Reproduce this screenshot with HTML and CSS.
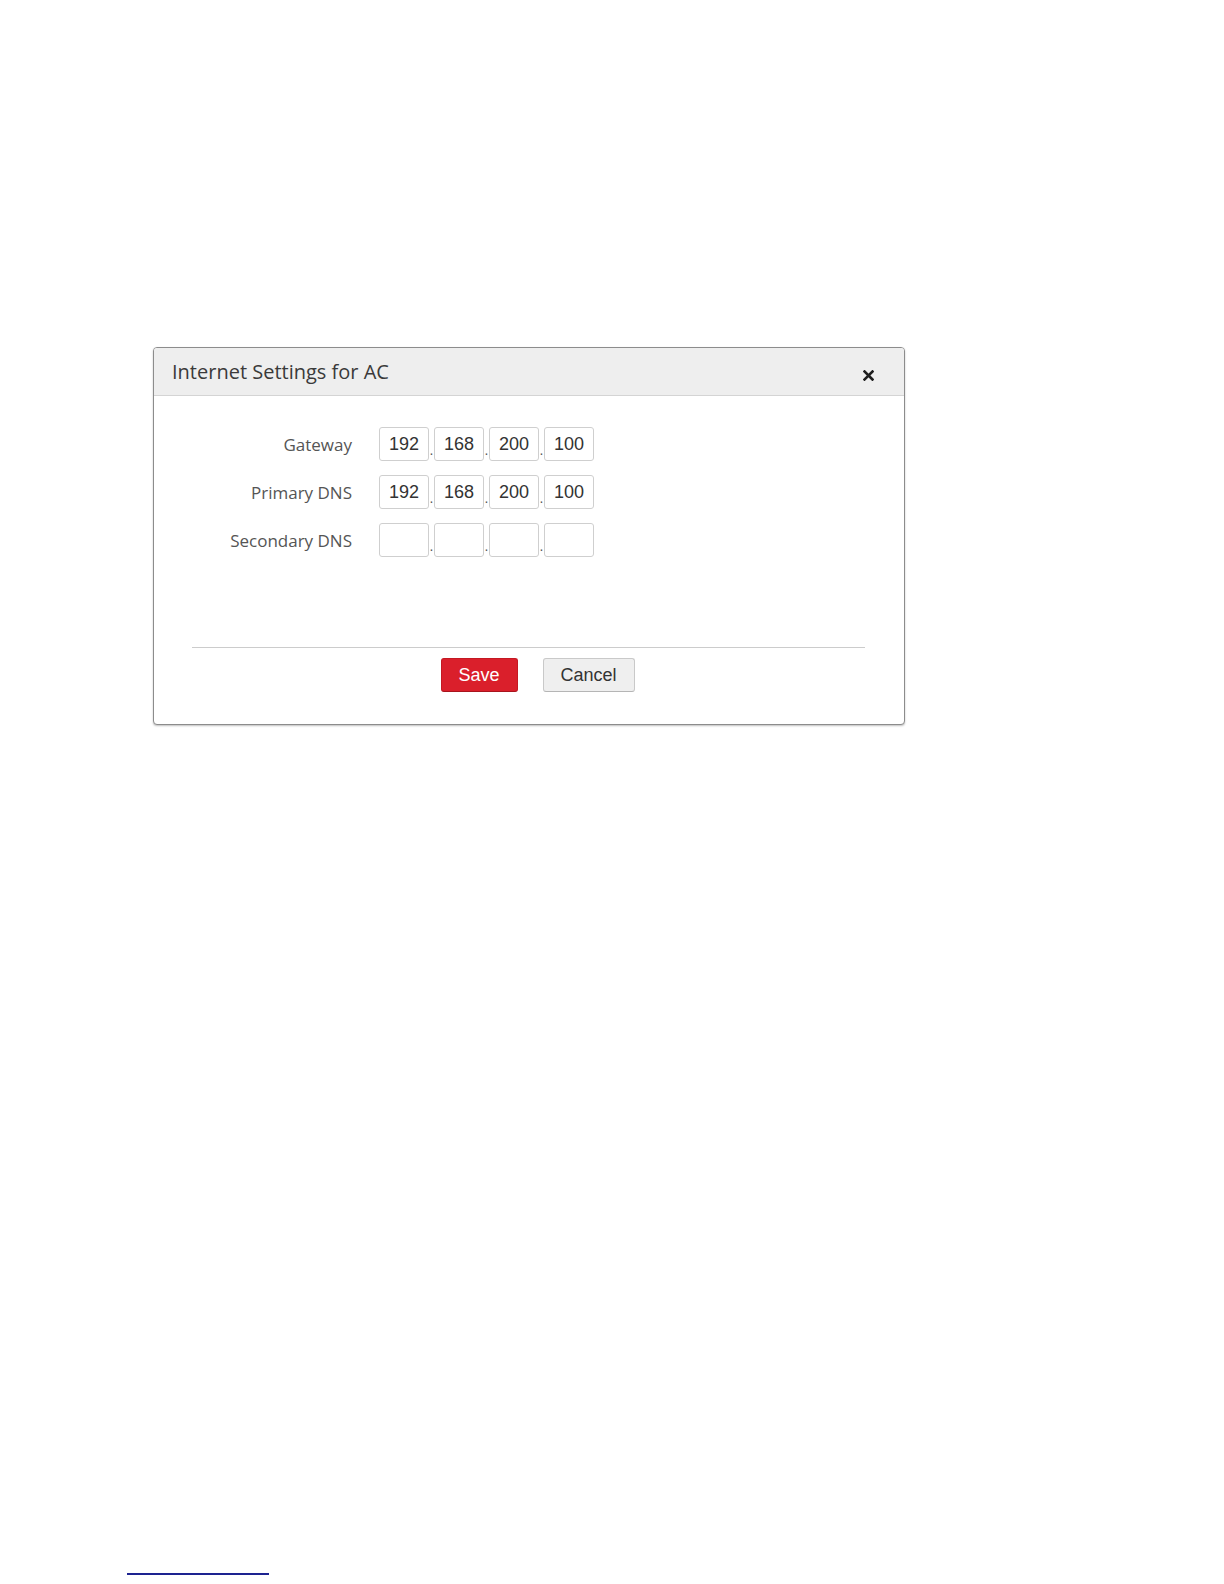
FILE: index.html
```html
<!DOCTYPE html>
<html>
<head>
    <title>Internet Settings for AC</title>
    <link rel="stylesheet" href="styles.css">
</head>
<body>
    <div class="page">
        <div class="dialog">
            <div class="dialog-header">
                <span class="dialog-title">Internet Settings for AC</span>
                <button class="close" type="button" aria-label="Close">
                    <svg width="11" height="11" viewBox="0 0 11 11">
                        <path d="M1.5 1.5 L9.5 9.5 M9.5 1.5 L1.5 9.5" stroke="#1e1e1e" stroke-width="2.6" stroke-linecap="square"/>
                    </svg>
                </button>
            </div>
            <form class="dialog-body">
                <div class="row">
                    <label>Gateway</label>
                    <div class="ip">
                        <input type="text" value="192"><span class="dot">.</span>
                        <input type="text" value="168"><span class="dot">.</span>
                        <input type="text" value="200"><span class="dot">.</span>
                        <input type="text" value="100">
                    </div>
                </div>
                <div class="row">
                    <label>Primary DNS</label>
                    <div class="ip">
                        <input type="text" value="192"><span class="dot">.</span>
                        <input type="text" value="168"><span class="dot">.</span>
                        <input type="text" value="200"><span class="dot">.</span>
                        <input type="text" value="100">
                    </div>
                </div>
                <div class="row">
                    <label>Secondary DNS</label>
                    <div class="ip">
                        <input type="text" value=""><span class="dot">.</span>
                        <input type="text" value=""><span class="dot">.</span>
                        <input type="text" value=""><span class="dot">.</span>
                        <input type="text" value="">
                    </div>
                </div>
            </form>
            <div class="dialog-footer">
                <button class="btn btn-save" type="button">Save</button>
                <button class="btn btn-cancel" type="button">Cancel</button>
            </div>
        </div>
        <div class="footnote-rule"></div>
    </div>
</body>
</html>
```

FILE: styles.css
```css
body {
    margin: 0;
    background-color: #fff;
    font-family: "Open Sans", "Noto Sans", sans-serif;
}

.page {
    padding-top: 347px;
    padding-left: 153px;
}

.dialog {
    width: 750px;
    height: 376px;
    border: 1px solid #8c8c8c;
    border-radius: 4px;
    background-color: #fff;
    box-shadow: 0 1px 2px rgba(0, 0, 0, 0.25);
    display: flex;
    flex-direction: column;
}

.dialog-header {
    height: 47px;
    display: flex;
    align-items: center;
    justify-content: space-between;
    padding: 0 30px 0 18px;
    background-color: #eeeeee;
    border-bottom: 1px solid #d4d4d4;
    border-radius: 3px 3px 0 0;
}

.dialog-title {
    font-size: 20px;
    color: #3a3a3a;
}

.close {
    border: none;
    background: none;
    padding: 0;
    margin-top: 8px;
    display: flex;
    cursor: pointer;
}

.dialog-body {
    padding-top: 31px;
    height: 251px;
    box-sizing: border-box;
    display: flex;
    flex-direction: column;
    gap: 14px;
}

.row {
    display: flex;
    align-items: center;
}

.row label {
    width: 198px;
    text-align: right;
    font-size: 17px;
    color: #555;
    margin-right: 27px;
}

.ip {
    display: flex;
    align-items: flex-end;
}

.ip input {
    width: 50px;
    height: 34px;
    box-sizing: border-box;
    border: 1px solid #cfcfcf;
    border-radius: 3px;
    padding: 0;
    text-align: center;
    font-family: "Liberation Sans", Arial, sans-serif;
    font-size: 18px;
    color: #333;
}

.dot {
    width: 5px;
    text-align: center;
    font-family: "Liberation Sans", Arial, sans-serif;
    font-size: 14px;
    line-height: 14px;
    color: #555;
    padding-bottom: 4px;
}

.dialog-footer {
    margin: 0 39px 0 38px;
    border-top: 1px solid #cccccc;
    padding: 10px 0 0 18px;
    display: flex;
    justify-content: center;
    gap: 25px;
}

.btn {
    height: 34px;
    border-radius: 3px;
    font-family: "Liberation Sans", Arial, sans-serif;
    font-size: 18px;
    cursor: pointer;
}

.btn-save {
    width: 77px;
    background-color: #da1f2b;
    border: 1px solid #c41822;
    border-bottom-color: #a8141d;
    color: #fff;
}

.btn-cancel {
    width: 92px;
    background-color: #efefef;
    border: 1px solid #c9c9c9;
    border-bottom-color: #b5b5b5;
    color: #333;
}

.footnote-rule {
    width: 142px;
    height: 2px;
    margin: 848px 0 0 -26px;
    background-color: #1d2390;
}
```
